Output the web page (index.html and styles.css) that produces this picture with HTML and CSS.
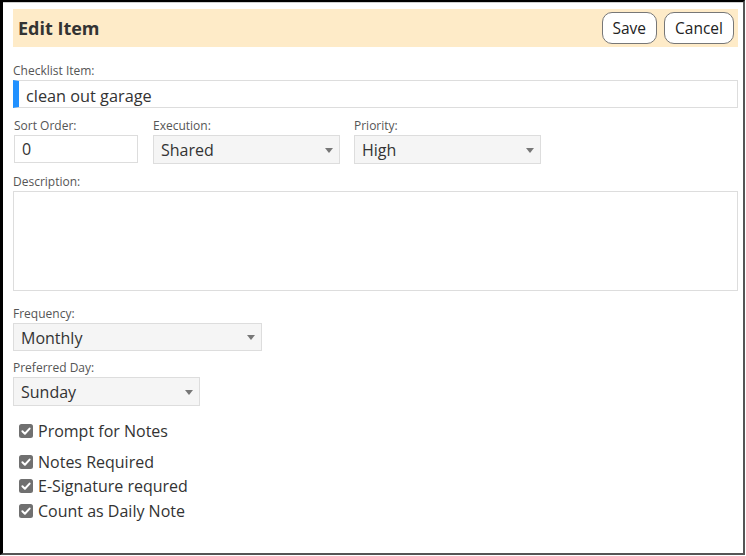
FILE: index.html
```html
<!DOCTYPE html>
<html lang="en">
<head>
    <meta charset="UTF-8">
    <meta name="viewport" content="width=device-width, initial-scale=1.0">
    <title>Edit Item</title>
    <link rel="stylesheet" href="styles.css">
</head>
<body>
    <div class="dialog">
        <header class="dialog-header">
            <h1>Edit Item</h1>
            <div class="actions">
                <button class="btn">Save</button>
                <button class="btn">Cancel</button>
            </div>
        </header>

        <div class="field">
            <label for="item">Checklist Item:</label>
            <input type="text" id="item" class="text-input item-input" value="clean out garage">
        </div>

        <div class="field-row">
            <div class="col col-sort">
                <label for="sort">Sort Order:</label>
                <input type="text" id="sort" class="text-input sort-input" value="0">
            </div>
            <div class="col">
                <label for="execution">Execution:</label>
                <div class="select-wrap w-187">
                    <select id="execution">
                        <option>Shared</option>
                        <option>Individual</option>
                    </select>
                </div>
            </div>
            <div class="col col-priority">
                <label for="priority">Priority:</label>
                <div class="select-wrap w-187">
                    <select id="priority">
                        <option>High</option>
                        <option>Medium</option>
                        <option>Low</option>
                    </select>
                </div>
            </div>
        </div>

        <div class="field field-desc">
            <label for="description">Description:</label>
            <textarea id="description"></textarea>
        </div>

        <div class="field field-freq">
            <label for="frequency">Frequency:</label>
            <div class="select-wrap w-249 short">
                <select id="frequency">
                    <option>Monthly</option>
                    <option>Weekly</option>
                    <option>Daily</option>
                </select>
            </div>
        </div>

        <div class="field">
            <label for="day">Preferred Day:</label>
            <div class="select-wrap w-187">
                <select id="day">
                    <option>Sunday</option>
                    <option>Monday</option>
                    <option>Tuesday</option>
                </select>
            </div>
        </div>

        <div class="checks">
            <div class="check check-first">
                <svg class="box" viewBox="0 0 14 14"><rect width="14" height="14" rx="2.5"/><path d="M3.4 7.3 L5.9 9.7 L10.6 4.6"/></svg>
                <span>Prompt for Notes</span>
            </div>
            <div class="check">
                <svg class="box" viewBox="0 0 14 14"><rect width="14" height="14" rx="2.5"/><path d="M3.4 7.3 L5.9 9.7 L10.6 4.6"/></svg>
                <span>Notes Required</span>
            </div>
            <div class="check">
                <svg class="box" viewBox="0 0 14 14"><rect width="14" height="14" rx="2.5"/><path d="M3.4 7.3 L5.9 9.7 L10.6 4.6"/></svg>
                <span>E-Signature requred</span>
            </div>
            <div class="check">
                <svg class="box" viewBox="0 0 14 14"><rect width="14" height="14" rx="2.5"/><path d="M3.4 7.3 L5.9 9.7 L10.6 4.6"/></svg>
                <span>Count as Daily Note</span>
            </div>
        </div>
    </div>
</body>
</html>
```

FILE: styles.css
```css
body {
    margin: 0;
    padding: 0;
    background: #fff;
    font-family: 'Open Sans', 'Noto Sans', sans-serif;
    color: #333;
}

.dialog {
    box-sizing: border-box;
    width: 745px;
    height: 555px;
    border-style: solid;
    border-width: 2px 2px 2px 3px;
    border-color: #000 #555 #555 #000;
    box-shadow: inset 0 1px 0 #cfcfcf;
    padding: 7px 5px 0 10px;
}

.dialog-header {
    display: flex;
    align-items: center;
    justify-content: space-between;
    height: 38px;
    padding: 0 4px 0 5px;
    background-color: #feebc8;
    margin-bottom: 16px;
}

.dialog-header h1 {
    margin: 0;
    font-size: 18px;
    font-weight: bold;
    color: #333;
}

.actions {
    display: flex;
    gap: 7px;
}

.btn {
    height: 32px;
    padding: 0 10px;
    font-family: inherit;
    font-size: 15.5px;
    color: #222;
    background: #fff;
    border: 1px solid #777;
    border-radius: 10px;
}

label {
    display: block;
    font-size: 12px;
    line-height: 16px;
    color: #555;
    margin-bottom: 1px;
}

.field {
    margin-bottom: 10px;
}

.text-input {
    box-sizing: border-box;
    display: block;
    height: 28px;
    padding: 0 7px;
    font-family: inherit;
    font-size: 16px;
    color: #333;
    border: 1px solid #ddd;
    outline: none;
}

.item-input {
    width: 100%;
    padding-top: 3px;
    font-size: 16.3px;
    border-left: 6px solid #2191ff;
}

.field-row {
    display: flex;
    margin-bottom: 10px;
}

.col-sort {
    margin-left: 1px;
    margin-right: 15px;
}

.col-priority {
    margin-left: 14px;
}

.sort-input {
    width: 124px;
}

.select-wrap {
    position: relative;
    height: 29px;
}

.select-wrap.short {
    height: 28px;
}

.select-wrap::after {
    content: "";
    position: absolute;
    right: 7px;
    top: 50%;
    margin-top: -2px;
    border-left: 4.5px solid transparent;
    border-right: 4.5px solid transparent;
    border-top: 5px solid #777;
}

.select-wrap select {
    -webkit-appearance: none;
    appearance: none;
    box-sizing: border-box;
    width: 100%;
    height: 100%;
    padding: 1px 7px 0;
    font-family: inherit;
    font-size: 16px;
    color: #333;
    background-color: #f5f5f5;
    border: 1px solid #ddd;
    border-radius: 0;
    outline: none;
}

.w-187 {
    width: 187px;
}

.w-249 {
    width: 249px;
}

.field-desc textarea {
    box-sizing: border-box;
    display: block;
    width: 100%;
    height: 100px;
    border: 1px solid #ddd;
    resize: none;
    outline: none;
}

.field-desc {
    margin-bottom: 15px;
}

.field-freq {
    margin-bottom: 9px;
}

.checks {
    margin-top: 13px;
    padding-left: 6px;
}

.check {
    display: flex;
    align-items: center;
    gap: 5px;
    height: 24.5px;
    font-size: 16px;
    color: #333;
}

.check-first {
    margin-bottom: 6px;
}

.box {
    width: 14px;
    height: 14px;
}

.box rect {
    fill: #707070;
}

.box path {
    fill: none;
    stroke: #fff;
    stroke-width: 2;
    stroke-linecap: round;
    stroke-linejoin: round;
}
```
